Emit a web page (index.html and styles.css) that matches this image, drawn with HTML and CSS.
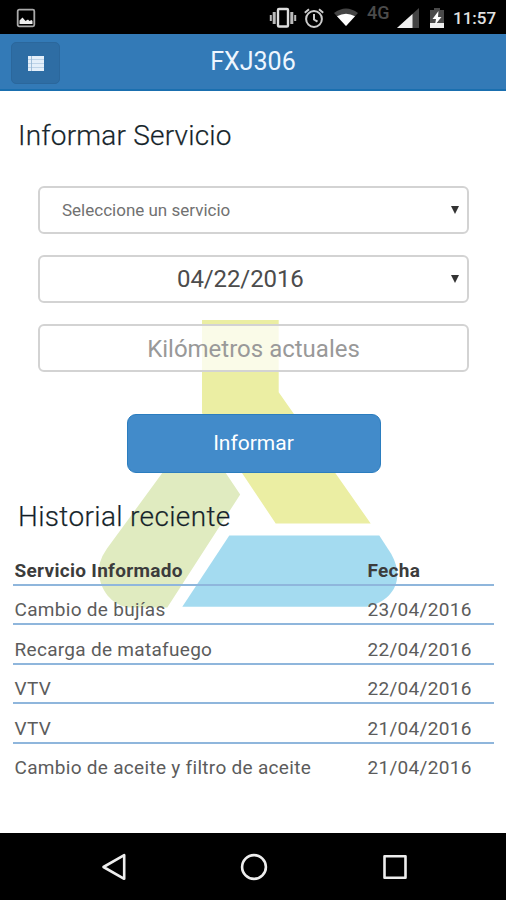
FILE: index.html
```html
<!DOCTYPE html>
<html lang="es">
<head>
<meta charset="utf-8">
<title>FXJ306</title>
<link rel="stylesheet" href="styles.css">
</head>
<body>
<div class="screen">
  <div class="status">
    <svg class="i-photo" width="20" height="20" viewBox="0 0 20 20"><rect x="1.700" y="1.700" width="16.600" height="16.600" rx="1.500" fill="none" stroke="#aaa" stroke-width="1.800"/><path d="M3.500 16v-3.500l3-3 3 3.500 2.500-1.500 1.500 1.500 2-1 1 1v3z" fill="#eee"/></svg>
    <svg class="i-vib" width="28" height="22" viewBox="0 0 28 22"><rect x="9" y="2" width="10" height="17.500" rx="1" fill="none" stroke="#ddd" stroke-width="2.400"/><path d="M5.200 5v12M22.800 5v12" stroke="#bbb" stroke-width="3"/><path d="M1.800 8v6M26.200 8v6" stroke="#bbb" stroke-width="2"/></svg>
    <svg class="i-alarm" width="22" height="22" viewBox="0 0 22 22"><g fill="none" stroke="#ccc" stroke-width="2"><circle cx="11" cy="12" r="7.900"/><path d="M11 7v5.500l3.500 2.200M1.800 5.700l4.200-3.500M20.200 5.700 16 2.200"/></g></svg>
    <svg class="i-wifi" width="26" height="20" viewBox="0 0 26 20"><path d="M1 5Q13-4 25 5L13 18z" fill="#444"/><path d="M4 8.300Q13 3 22 8.300L13 18z" fill="#fff"/></svg>
    <span class="net">4G</span>
    <svg class="i-sig" width="22" height="20" viewBox="0 0 22 20"><path d="M0 20 22 0v20z" fill="#444"/><path d="M0 20 15.500 5.900V20z" fill="#eee"/></svg>
    <svg class="i-bat" width="14" height="20" viewBox="0 0 14 20"><path d="M0 2h4V0h6v2h4v18H0z" fill="#4a4a4a"/><path d="M0 15h14v5H0z" fill="#eee"/><path d="M8.500 3 2.500 11h3.500l-1 6 6.500-8H8z" fill="#fff"/></svg>
    <span class="clock">11:57</span>
  </div>
  <header class="bar">
    <button class="menu" aria-label="Menú"><svg width="16" height="15" viewBox="0 0 16 15"><path d="M0 0h16v15H0z" fill="#e4effa"/><path d="M0 3.500h16M0 7.500h16M0 11.500h16" stroke="#b3cce3" stroke-width=".8"/><path d="M3.500 0v15" stroke="#8fb2d2" stroke-width=".8"/></svg></button>
    <h1>FXJ306</h1>
  </header>
  <main>
    <svg class="mark" width="300" height="288" viewBox="99 319.500 300 288">
      <path d="M202 319.500h76.700v72.200l92 131.300h-95L202 412.600z" fill="#ebeea3"/>
      <path d="M161.700 473.300 175 455h39l26.200 39-72.900 113H128C108 604 95 582 100 562Q102 555 107 548z" fill="#e0ebc0"/>
      <path d="M229.300 535h150l12 18.500C406 580 392 601 366.700 606.300H182.300z" fill="#a4dbf0"/>
    </svg>
    <h2>Informar Servicio</h2>
    <form class="form">
      <div class="field select"><span class="small">Seleccione un servicio</span><i class="caret"></i></div>
      <div class="field select"><span class="date">04/22/2016</span><i class="caret"></i></div>
      <div class="field"><span class="hint">Kilómetros actuales</span></div>
      <button class="send" type="button"><span>Informar</span></button>
    </form>
    <h2 class="recent">Historial reciente</h2>
    <div class="table">
      <div class="row head"><span>Servicio Informado</span><span>Fecha</span></div>
      <div class="row"><span>Cambio de bujías</span><span>23/04/2016</span></div>
      <div class="row"><span>Recarga de matafuego</span><span>22/04/2016</span></div>
      <div class="row"><span>VTV</span><span>22/04/2016</span></div>
      <div class="row"><span>VTV</span><span>21/04/2016</span></div>
      <div class="row"><span>Cambio de aceite y filtro de aceite</span><span>21/04/2016</span></div>
    </div>
  </main>
  <nav class="nav">
    <svg width="26" height="30" viewBox="0 0 26 30"><path d="M23.200 3.200v23.600L2.500 15z" fill="none" stroke="#eee" stroke-width="2.600" stroke-linejoin="round"/></svg>
    <svg width="30" height="30" viewBox="0 0 30 30"><circle cx="15" cy="15" r="11.900" fill="none" stroke="#eee" stroke-width="2.600"/></svg>
    <svg width="30" height="30" viewBox="0 0 30 30"><rect x="3.500" y="4.300" width="21" height="21.400" fill="none" stroke="#eee" stroke-width="2.600" stroke-linejoin="round"/></svg>
  </nav>
</div>
</body>
</html>
```

FILE: styles.css
```css
* { box-sizing: border-box; }
body { margin: 0; background: #fff; font-family: Roboto, "Liberation Sans", sans-serif; }
svg { display: block; flex: none; }
.screen { width: 506px; height: 900px; display: flex; flex-direction: column; overflow: hidden; }

.status { height: 34px; background: #000; display: flex; align-items: center; padding: 2px 0 0 16px; flex: none; }
.i-vib { margin-left: 233px; }
.i-alarm { margin-left: 6px; }
.i-wifi { margin-left: 8px; }
.net { margin: -10px 0 0 8px; width: 25px; font-size: 18px; line-height: 20px; font-weight: 500; color: #4b4b4b; }
.i-sig { margin-left: 5px; }
.i-bat { margin-left: 11px; }
.clock { margin-left: 9px; font-size: 17px; line-height: 20px; font-weight: 500; color: #e2e2e2; white-space: nowrap; }

.bar { height: 57px; flex: none; background: #337ab7; border-bottom: 2px solid #1a6faf; display: grid; grid-template-columns: 60px 1fr 60px; align-items: center; }
.menu { width: 49px; height: 42px; margin: 2px 0 0 11px; padding: 2px 0 0 1px; display: flex; align-items: center; justify-content: center; background: #2e6da4; border: 1px solid #2b679c; border-radius: 5px; }
h1 { margin: 0; text-align: center; font-size: 25px; line-height: 30px; font-weight: 400; color: #eef6ff; }

main { position: relative; height: 742px; flex: none; display: flex; flex-direction: column; }
main > * { position: relative; }
main > .mark { position: absolute; left: 99px; top: 228.500px; }
h2 { margin: 27px 0 0 18px; font-size: 28px; line-height: 36px; font-weight: 300; letter-spacing: .2px; color: #111c24; -webkit-text-stroke: .25px #36414a; white-space: nowrap; }
.form { margin: 32px 37px 0 38px; display: flex; flex-direction: column; gap: 21px; }
.field { height: 48px; border: 2px solid #d3d3d3; border-radius: 6px; background: rgba(255,255,255,.75); display: flex; align-items: center; justify-content: center; }
.select { justify-content: space-between; padding: 0 8px 0 22px; }
.caret { border: 4.500px solid transparent; border-top: 8px solid #333; border-bottom: 0; }
.small { font-size: 17px; color: #717171; }
.date { font-size: 24px; letter-spacing: -.1px; color: #4c4c4c; margin-left: 115px; }
.hint { font-size: 24px; color: #999; padding-top: 2px; }
.send { align-self: center; width: 254px; height: 59px; margin-top: 21px; border: 1px solid #2b7dbf; border-radius: 9px; background: #428bca; color: #fff; font: 400 21px/26px Roboto, "Liberation Sans", sans-serif; padding-bottom: 3px; }
.recent { margin-top: 26px; letter-spacing: .35px; }
.table { margin: 18px 12px 0 13px; }
.row { height: 39.400px; display: grid; grid-template-columns: 353px 1fr; align-items: end; padding: 0 0 2px 1.500px; border-bottom: 2px solid #8fb6dc; font-size: 19px; line-height: 22px; color: #5c5c5c; letter-spacing: .3px; white-space: nowrap; }
.row:last-child { border-bottom-color: transparent; }
.head { height: 33px; font-weight: 700; color: #3c3c3c; }

.nav { flex: 1; background: #000; display: grid; grid-template-columns: 26px 30px 30px; align-items: center; padding-left: 101px; column-gap: 112px; }
```
